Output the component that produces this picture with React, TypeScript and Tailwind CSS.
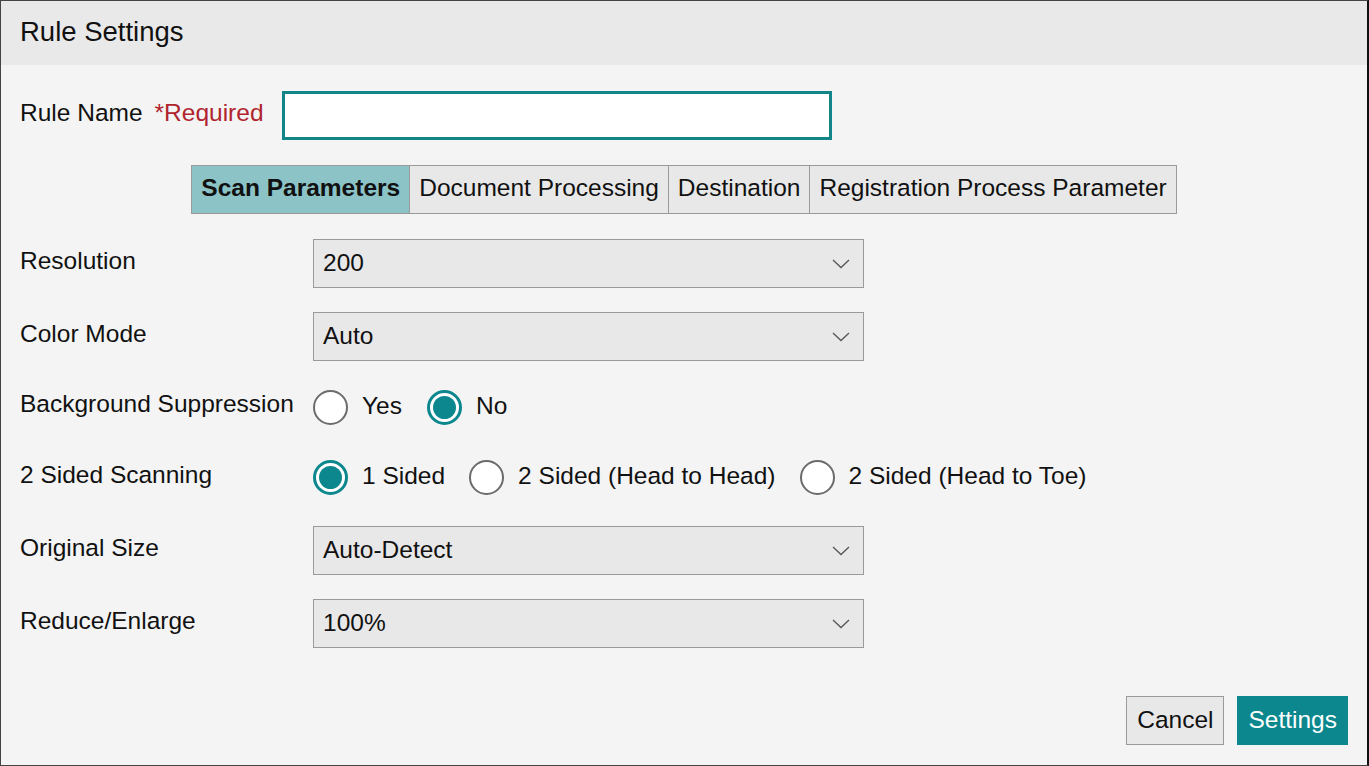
import React from 'react';

const tabs = ['Scan Parameters', 'Document Processing', 'Destination', 'Registration Process Parameter'];

function Chevron() {
  return (
    <svg width="18" height="10" viewBox="0 0 18 10" className="shrink-0">
      <polyline points="1,1 9,8.5 17,1" fill="none" stroke="#555" strokeWidth="1.3" />
    </svg>
  );
}

function Select({ value }: { value: string }) {
  return (
    <div className="w-[551px] h-[49px] bg-[#e8e8e8] border border-[#9a9a9a] flex items-center justify-between pl-[9px] pr-[13px]">
      <span>{value}</span>
      <Chevron />
    </div>
  );
}

function Radio({ label, checked }: { label: string; checked?: boolean }) {
  return (
    <label className="flex items-center gap-[14px]">
      {checked ? (
        <span className="w-[35px] h-[35px] rounded-full border-[3px] border-[#0b878d] bg-white flex items-center justify-center">
          <span className="w-[23px] h-[23px] rounded-full bg-[#0b878d]" />
        </span>
      ) : (
        <span className="w-[35px] h-[35px] rounded-full border-2 border-[#6b6b6b] bg-white" />
      )}
      <span className="pb-[2px]">{label}</span>
    </label>
  );
}

function Row({ label, height, children }: { label: string; height: string; children: React.ReactNode }) {
  return (
    <div className={`flex items-center ${height}`}>
      <div className="w-[293px] shrink-0 pb-[5px]">{label}</div>
      {children}
    </div>
  );
}

export default function App() {
  return (
    <div
      className="h-screen flex flex-col bg-[#f4f4f4] text-[#111] text-[24.5px] border border-[#444] border-r-2 border-r-[#111]"
      style={{ fontFamily: '"Liberation Sans", Arial, sans-serif' }}
    >
      <div className="h-[64px] bg-[#e9e9e9] flex items-center px-[19px] shrink-0">
        <h1 className="text-[27.5px] pb-[3px]">Rule Settings</h1>
      </div>

      <div className="flex items-center mt-[26px] pl-[19px]">
        <span className="pb-[5px]">Rule Name</span>
        <span className="ml-[12px] pb-[5px] text-[#b0242e]">*Required</span>
        <input className="ml-[18px] w-[550px] h-[49px] bg-white border-[3px] border-[#128589] outline-none px-2" />
      </div>

      <div className="flex justify-center mt-[25px]">
        <div className="flex border border-[#9a9a9a] h-[49px]">
          {tabs.map((t, i) => (
            <div
              key={t}
              className={`flex items-center px-[9px] pb-[2px] ${i > 0 ? 'border-l border-[#9a9a9a]' : ''} ${
                i === 0 ? 'bg-[#8bc3c7] font-bold' : 'bg-[#e8e8e8]'
              }`}
            >
              {t}
            </div>
          ))}
        </div>
      </div>

      <div className="flex flex-col gap-[24px] mt-[25px] pl-[19px]">
        <Row label="Resolution" height="h-[49px]">
          <Select value="200" />
        </Row>
        <Row label="Color Mode" height="h-[49px]">
          <Select value="Auto" />
        </Row>
        <Row label="Background Suppression" height="h-[44px]">
          <div className="flex items-center gap-[25px]">
            <Radio label="Yes" />
            <Radio label="No" checked />
          </div>
        </Row>
        <Row label="2 Sided Scanning" height="h-[49px]">
          <div className="flex items-center gap-[24px]">
            <Radio label="1 Sided" checked />
            <Radio label="2 Sided (Head to Head)" />
            <Radio label="2 Sided (Head to Toe)" />
          </div>
        </Row>
        <Row label="Original Size" height="h-[49px]">
          <Select value="Auto-Detect" />
        </Row>
        <Row label="Reduce/Enlarge" height="h-[49px]">
          <Select value="100%" />
        </Row>
      </div>

      <div className="mt-auto flex justify-end gap-[13px] pr-[19px] pb-[20px]">
        <button className="h-[49px] px-[10px] bg-[#e8e8e8] border border-[#9a9a9a]">Cancel</button>
        <button className="h-[49px] px-[11px] bg-[#0b878d] text-white">Settings</button>
      </div>
    </div>
  );
}
